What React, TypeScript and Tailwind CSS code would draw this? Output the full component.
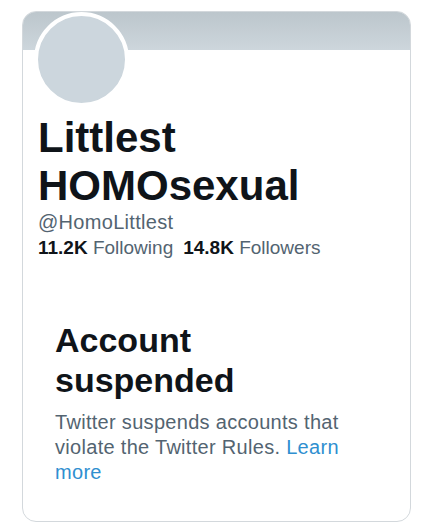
import React from 'react';

export default function App() {
    return (
        <div className="w-[428px] h-[527px] bg-white pt-[11px] px-[22px]" style={{ fontFamily: '"Liberation Sans", Arial, sans-serif' }}>
            <div className="h-[511px] w-[389px] border border-[#d3d8dc] rounded-[14px] overflow-hidden bg-white">
                <div className="h-[38px] bg-gradient-to-b from-[#bcc6cc] to-[#cdd6dc]" />
                <div className="relative -mt-[38px] ml-[11px] w-[95px] h-[95px] rounded-full border-4 border-white bg-[#ccd6dd]" />

                <div className="pl-[15px] mt-[7px]">
                    <h1 className="text-[42px] leading-[48px] font-bold text-[#0f1419]">
                        Littlest
                        <br />
                        HOMOsexual
                    </h1>
                    <p className="text-[20px] leading-[25px] tracking-[0.3px] text-[#536471]">@HomoLittlest</p>
                    <p className="text-[19px] leading-[25px] text-[#536471]">
                        <span className="font-bold text-[#0f1419]">11.2K</span> Following
                        <span className="ml-[10px] font-bold text-[#0f1419]">14.8K</span> Followers
                    </p>
                </div>

                <div className="pl-[32px] mt-[60px]">
                    <h2 className="text-[34px] leading-[40px] font-bold text-[#0f1419]">
                        Account
                        <br />
                        suspended
                    </h2>
                    <p className="mt-[10px] w-[300px] text-[20px] leading-[25px] tracking-[0.3px] text-[#536471]">
                        Twitter suspends accounts that violate the Twitter Rules. <span className="text-[#2f8fd0]">Learn more</span>
                    </p>
                </div>
            </div>
        </div>
    );
}
